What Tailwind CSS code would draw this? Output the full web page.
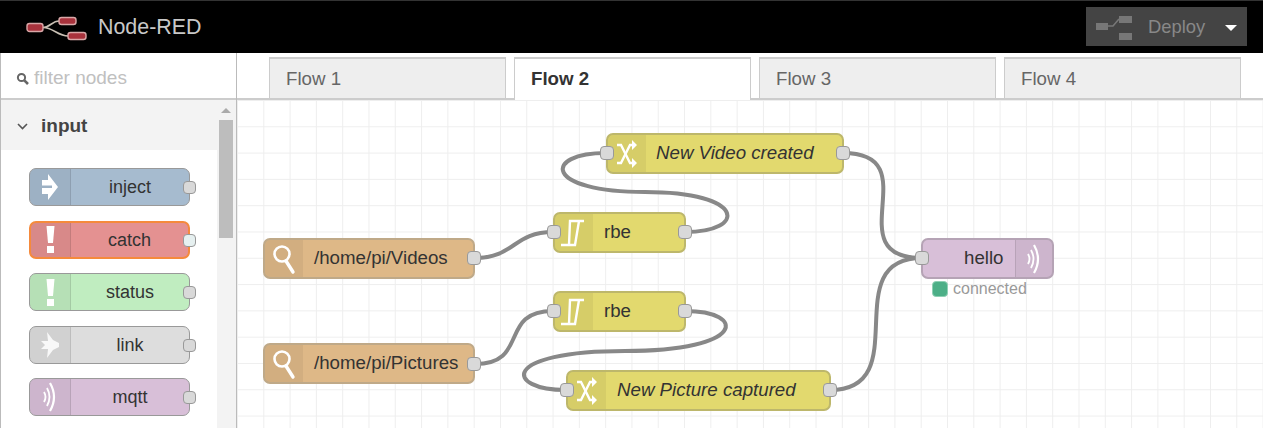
<!DOCTYPE html>
<html lang="en">
  <head>
    <meta charset="UTF-8" />
    <title>Node-RED</title>
    <script src="https://cdn.jsdelivr.net/npm/@tailwindcss/browser@4"></script>
  </head>
  <body class="overflow-hidden bg-white">
    <div class="flex flex-col w-[1263px] h-[428px] overflow-hidden font-['Liberation_Sans',sans-serif] text-[#333]">
      <!-- header -->
      <header class="flex items-center justify-between h-[53px] shrink-0 bg-black border-t border-[#333] pl-[26px] pr-4">
        <div class="flex items-center gap-[10px]">
          <svg width="62" height="28" viewBox="0 0 62 28" fill="none">
            <path d="M17 14.5 C24 14.5 26 8 33 8 M17 14.5 C27 14.5 32 23 42 23" stroke="#c9c0b4" stroke-width="1.6" />
            <rect x="1" y="10.5" width="16" height="8" rx="2.5" fill="#a8323c" stroke="#d9a7a7" stroke-width="1.4" />
            <rect x="33" y="4.5" width="17" height="7" rx="2.5" fill="#a8323c" stroke="#d9a7a7" stroke-width="1.4" />
            <rect x="42" y="19.5" width="18" height="7" rx="2.5" fill="#a8323c" stroke="#d9a7a7" stroke-width="1.4" />
          </svg>
          <span class="text-[21.4px] text-[#c8c8c8]">Node-RED</span>
        </div>
        <div class="flex items-center w-[161px] h-[39px] bg-[#444] pl-[10px] pt-[2px] mb-[1px]">
          <svg width="36" height="24" viewBox="0 0 36 24" fill="#777">
            <rect x="0" y="7" width="12" height="7" />
            <rect x="23" y="0" width="13" height="7" />
            <rect x="23" y="17" width="13" height="7" />
            <path d="M12 10 H17 L23 3" fill="none" stroke="#777" stroke-width="1.6" />
          </svg>
          <span class="ml-[16px] mb-[2px] text-[18.4px] text-[#888]">Deploy</span>
          <span class="ml-[20px] w-0 h-0 border-x-[6px] border-x-transparent border-t-[6px] border-t-white"></span>
        </div>
      </header>

      <div class="flex flex-1 min-h-0">
        <!-- palette sidebar -->
        <aside class="flex flex-col w-[237px] shrink-0 border-l border-r border-[#bbb]">
          <div class="flex items-center h-[47px] shrink-0 border-b-2 border-[#ccc] pl-[15px] pt-[5px] gap-[5px]">
            <svg width="13" height="13" viewBox="0 0 13 13" fill="none" stroke="#666" stroke-width="2">
              <circle cx="5.5" cy="5.5" r="3.6" />
              <path d="M8.3 8.3 L12 12" stroke-width="2.6" />
            </svg>
            <span class="text-[19px] text-[#c0c0c0]">filter nodes</span>
          </div>
          <div class="flex flex-1 min-h-0">
            <div class="flex-1 min-w-0">
              <div class="flex items-center h-[50px] bg-[#f3f3f3] pl-[16px] pt-[2px] gap-[13px]">
                <svg width="11" height="7" viewBox="0 0 11 7" fill="none" stroke="#555" stroke-width="1.6">
                  <path d="M1 1 L5.5 5.5 L10 1" />
                </svg>
                <span class="text-[19px] font-bold text-[#444]">input</span>
              </div>
              <div class="flex flex-col gap-[14.6px] pl-[28px] pt-[18px]">
                <!-- inject -->
                <div class="relative flex w-[161px] h-[38px] rounded-[7px] border border-[#999] bg-[#a6bbcf]">
                  <div class="flex items-center justify-center w-[41px] shrink-0 border-r border-black/10 bg-black/5 rounded-l-[6px]">
                    <svg width="18" height="28" viewBox="0 0 18 28" fill="#fff" fill-rule="evenodd">
                      <path d="M7 1 L17 14 L7 27 L7 21 L1 21 L1 7 L7 7 Z M1 12.5 H11 V15 H1 Z" />
                    </svg>
                  </div>
                  <span class="flex-1 text-center text-[18px] leading-[36px] text-[#333]">inject</span>
                  <span class="absolute right-[-7px] top-[12px] w-[13px] h-[13px] rounded-[4px] border border-[#999] bg-[#d9d9d9]"></span>
                </div>
                <!-- catch -->
                <div class="relative flex w-[161px] h-[38px] rounded-[7px] border-2 border-[#f58a3c] bg-[#e49191]">
                  <div class="flex items-center justify-center w-[40px] shrink-0 border-r border-black/10 bg-black/5 rounded-l-[5px]">
                    <svg width="9" height="27" viewBox="0 0 9 27" fill="#fff">
                      <path d="M0.5 0 H8.5 L7 17 H2 Z" />
                      <rect x="1" y="20" width="7" height="7" />
                    </svg>
                  </div>
                  <span class="flex-1 text-center text-[18px] leading-[34px] text-[#333]">catch</span>
                  <span class="absolute right-[-8px] top-[11px] w-[13px] h-[13px] rounded-[4px] border border-[#999] bg-[#e6f0f0]"></span>
                </div>
                <!-- status -->
                <div class="relative flex w-[161px] h-[38px] rounded-[7px] border border-[#999] bg-[#c0edc0]">
                  <div class="flex items-center justify-center w-[41px] shrink-0 border-r border-black/10 bg-black/5 rounded-l-[6px]">
                    <svg width="9" height="27" viewBox="0 0 9 27" fill="#fff">
                      <path d="M0.5 0 H8.5 L7 17 H2 Z" />
                      <rect x="1" y="20" width="7" height="7" />
                    </svg>
                  </div>
                  <span class="flex-1 text-center text-[18px] leading-[36px] text-[#333]">status</span>
                  <span class="absolute right-[-7px] top-[12px] w-[13px] h-[13px] rounded-[4px] border border-[#999] bg-[#d9d9d9]"></span>
                </div>
                <!-- link -->
                <div class="relative flex w-[161px] h-[38px] rounded-[7px] border border-[#999] bg-[#dddddd]">
                  <div class="flex items-center justify-center w-[41px] shrink-0 border-r border-black/10 bg-black/5 rounded-l-[6px]">
                    <svg width="20" height="28" viewBox="0 0 20 28" fill="#fff" opacity="0.85">
                      <path d="M7 1 L13 9 L19 12 L19 16 L13 19 L7 27 L8 18 L1 18 L5 14 L1 10 L8 10 Z" />
                    </svg>
                  </div>
                  <span class="flex-1 text-center text-[18px] leading-[36px] text-[#333]">link</span>
                  <span class="absolute right-[-7px] top-[12px] w-[13px] h-[13px] rounded-[4px] border border-[#999] bg-[#d9d9d9]"></span>
                </div>
                <!-- mqtt -->
                <div class="relative flex w-[161px] h-[38px] rounded-[7px] border border-[#999] bg-[#d8bfd8]">
                  <div class="flex items-center justify-center w-[41px] shrink-0 border-r border-black/10 bg-black/5 rounded-l-[6px]">
                    <svg width="14" height="32" viewBox="0 0 14 32" fill="none" stroke="#fff" stroke-width="1.8">
                      <path d="M1 11 Q4 16 1 21" />
                      <path d="M4 7 Q9 16 4 25" />
                      <path d="M7 2 Q15 16 7 30" stroke-width="2.2" />
                    </svg>
                  </div>
                  <span class="flex-1 text-center text-[18px] leading-[36px] text-[#333]">mqtt</span>
                  <span class="absolute right-[-7px] top-[12px] w-[13px] h-[13px] rounded-[4px] border border-[#999] bg-[#d9d9d9]"></span>
                </div>
              </div>
            </div>
            <!-- scrollbar -->
            <div class="flex flex-col items-center w-[19px] shrink-0 bg-[#f3f3f3] pr-[1px]">
              <span class="mt-[8px] w-0 h-0 border-x-[5px] border-x-transparent border-b-[5px] border-b-[#aaa]"></span>
              <span class="mt-[7px] w-[14px] h-[118px] bg-[#bdbdbd]"></span>
            </div>
          </div>
        </aside>

        <main class="flex flex-col flex-1 min-w-0">
          <!-- tabs -->
          <div class="flex items-end h-[47px] shrink-0 gap-[8px] border-b-2 border-[#ccc] pl-[32px]">
            <div class="w-[237px] h-[41px] border-x border-t-2 border-[#ccc] bg-[#eeeeee] pl-[16px] text-[18.7px] leading-[39px] text-[#666]">Flow 1</div>
            <div class="w-[237px] h-[43px] -mb-[2px] border-x border-t-2 border-[#ccc] bg-white pl-[16px] text-[18.7px] leading-[39px] font-bold">Flow 2</div>
            <div class="w-[237px] h-[41px] border-x border-t-2 border-[#ccc] bg-[#eeeeee] pl-[16px] text-[18.7px] leading-[39px] text-[#666]">Flow 3</div>
            <div class="w-[237px] h-[41px] border-x border-t-2 border-[#ccc] bg-[#eeeeee] pl-[16px] text-[18.7px] leading-[39px] text-[#666]">Flow 4</div>
          </div>

          <!-- workspace: nodes sit on a free canvas -->
          <div class="relative flex-1 min-h-0 overflow-hidden bg-white bg-[linear-gradient(#eeeeee_1px,transparent_1px),linear-gradient(90deg,#eeeeee_1px,transparent_1px)] bg-[size:26.3px_26.3px] bg-[position:0_0]">
            <!-- wires, coordinates are the page's minus the canvas origin (237,100) -->
            <svg class="absolute left-0 top-0" width="1026" height="328" fill="none" stroke="#888" stroke-width="4">
              <path d="M238 158 C278 158 276 132 316 132" />
              <path d="M448 132 C510 132 510 92 408 92 C306 92 306 53 369 53" />
              <path d="M606 53 C693 53 598 158 685 158" />
              <path d="M238 264 C293 264 261 211 316 211" />
              <path d="M448 211 C510 211 510 251 388 251 C262 251 268 290 329 290" />
              <path d="M593 290 C680 290 598 158 685 158" />
            </svg>

            <!-- /home/pi/Videos -->
            <div class="absolute left-[26px] top-[138px] flex w-[212px] h-[41px] rounded-[7px] border-2 border-[#bfa988] bg-[#deb887]">
              <div class="flex items-center justify-center w-[38px] shrink-0 bg-black/5 rounded-l-[5px]">
                <svg width="24" height="32" viewBox="0 0 24 32" fill="none" stroke="#fff">
                  <circle cx="10" cy="11" r="7.5" stroke-width="2.6" />
                  <path d="M14 18 L21 29" stroke-width="3.4" stroke-linecap="round" />
                </svg>
              </div>
              <span class="ml-[11px] text-[18.7px] leading-[35px]">/home/pi/Videos</span>
              <span class="absolute right-[-8px] top-[11px] w-[14px] h-[14px] rounded-[4px] border border-[#999] bg-[#d9d9d9]"></span>
            </div>

            <!-- /home/pi/Pictures -->
            <div class="absolute left-[26px] top-[243px] flex w-[212px] h-[41px] rounded-[7px] border-2 border-[#bfa988] bg-[#deb887]">
              <div class="flex items-center justify-center w-[38px] shrink-0 bg-black/5 rounded-l-[5px]">
                <svg width="24" height="32" viewBox="0 0 24 32" fill="none" stroke="#fff">
                  <circle cx="10" cy="11" r="7.5" stroke-width="2.6" />
                  <path d="M14 18 L21 29" stroke-width="3.4" stroke-linecap="round" />
                </svg>
              </div>
              <span class="ml-[11px] text-[18.7px] leading-[35px]">/home/pi/Pictures</span>
              <span class="absolute right-[-8px] top-[12px] w-[14px] h-[14px] rounded-[4px] border border-[#999] bg-[#d9d9d9]"></span>
            </div>

            <!-- rbe top -->
            <div class="absolute left-[316px] top-[112px] flex w-[133px] h-[41px] rounded-[7px] border-2 border-[#bdb76b] bg-[#e2d96e]">
              <div class="flex items-center justify-center w-[38px] shrink-0 bg-black/5 rounded-l-[5px]">
                <svg width="26" height="30" viewBox="0 0 26 30" fill="none" stroke="#fff" stroke-width="2.4">
                  <path d="M0 27 H14 L18 3 M23 3 H9 L8 27" />
                </svg>
              </div>
              <span class="ml-[11px] text-[18.7px] leading-[35px]">rbe</span>
              <span class="absolute left-[-8px] top-[11px] w-[14px] h-[14px] rounded-[4px] border border-[#999] bg-[#d9d9d9]"></span>
              <span class="absolute right-[-8px] top-[11px] w-[14px] h-[14px] rounded-[4px] border border-[#999] bg-[#d9d9d9]"></span>
            </div>

            <!-- rbe bottom -->
            <div class="absolute left-[316px] top-[191px] flex w-[133px] h-[41px] rounded-[7px] border-2 border-[#bdb76b] bg-[#e2d96e]">
              <div class="flex items-center justify-center w-[38px] shrink-0 bg-black/5 rounded-l-[5px]">
                <svg width="26" height="30" viewBox="0 0 26 30" fill="none" stroke="#fff" stroke-width="2.4">
                  <path d="M0 27 H14 L18 3 M23 3 H9 L8 27" />
                </svg>
              </div>
              <span class="ml-[11px] text-[18.7px] leading-[35px]">rbe</span>
              <span class="absolute left-[-8px] top-[11px] w-[14px] h-[14px] rounded-[4px] border border-[#999] bg-[#d9d9d9]"></span>
              <span class="absolute right-[-8px] top-[11px] w-[14px] h-[14px] rounded-[4px] border border-[#999] bg-[#d9d9d9]"></span>
            </div>

            <!-- New Video created -->
            <div class="absolute left-[369px] top-[33px] flex w-[238px] h-[41px] rounded-[7px] border-2 border-[#bdb76b] bg-[#e2d96e]">
              <div class="flex items-center justify-center w-[38px] shrink-0 bg-black/5 rounded-l-[5px]">
                <svg width="22" height="30" viewBox="0 0 22 30" fill="none" stroke="#fff" stroke-width="2.4">
                  <path d="M1 6 H5 L14 24 H18" />
                  <path d="M1 24 H5 L14 6 H18" />
                  <path d="M16 1 L21 6 L16 11 Z M16 19 L21 24 L16 29 Z" fill="#fff" stroke="none" />
                </svg>
              </div>
              <span class="ml-[10px] text-[18.7px] leading-[35px] italic">New Video created</span>
              <span class="absolute left-[-8px] top-[11px] w-[14px] h-[14px] rounded-[4px] border border-[#999] bg-[#d9d9d9]"></span>
              <span class="absolute right-[-8px] top-[11px] w-[14px] h-[14px] rounded-[4px] border border-[#999] bg-[#d9d9d9]"></span>
            </div>

            <!-- New Picture captured -->
            <div class="absolute left-[329px] top-[270px] flex w-[265px] h-[41px] rounded-[7px] border-2 border-[#bdb76b] bg-[#e2d96e]">
              <div class="flex items-center justify-center w-[38px] shrink-0 bg-black/5 rounded-l-[5px]">
                <svg width="22" height="30" viewBox="0 0 22 30" fill="none" stroke="#fff" stroke-width="2.4">
                  <path d="M1 6 H5 L14 24 H18" />
                  <path d="M1 24 H5 L14 6 H18" />
                  <path d="M16 1 L21 6 L16 11 Z M16 19 L21 24 L16 29 Z" fill="#fff" stroke="none" />
                </svg>
              </div>
              <span class="ml-[11px] text-[18.7px] leading-[35px] italic">New Picture captured</span>
              <span class="absolute left-[-8px] top-[11px] w-[14px] h-[14px] rounded-[4px] border border-[#999] bg-[#d9d9d9]"></span>
              <span class="absolute right-[-8px] top-[11px] w-[14px] h-[14px] rounded-[4px] border border-[#999] bg-[#d9d9d9]"></span>
            </div>

            <!-- hello -->
            <div class="absolute left-[684px] top-[138px] flex w-[133px] h-[41px] rounded-[7px] border-2 border-[#b5a3b5] bg-[#d8bfd8]">
              <span class="flex-1 pl-[41px] text-[18.7px] leading-[35px]">hello</span>
              <div class="flex items-center justify-center w-[37px] shrink-0 border-l border-black/10 bg-black/5 rounded-r-[5px]">
                <svg width="14" height="32" viewBox="0 0 14 32" fill="none" stroke="#fff" stroke-width="1.8">
                  <path d="M1 11 Q4 16 1 21" />
                  <path d="M4 7 Q9 16 4 25" />
                  <path d="M7 2 Q15 16 7 30" stroke-width="2.2" />
                </svg>
              </div>
              <span class="absolute left-[-8px] top-[11px] w-[14px] h-[14px] rounded-[4px] border border-[#999] bg-[#d9d9d9]"></span>
            </div>
            <div class="absolute left-[695px] top-[181px] flex items-center gap-[5px]">
              <span class="w-[16px] h-[16px] rounded-[4px] border border-[#8fd0b4] bg-[#4caf87]"></span>
              <span class="text-[16px] leading-[16px] text-[#999]">connected</span>
            </div>
          </div>
        </main>
      </div>
    </div>
  </body>
</html>
